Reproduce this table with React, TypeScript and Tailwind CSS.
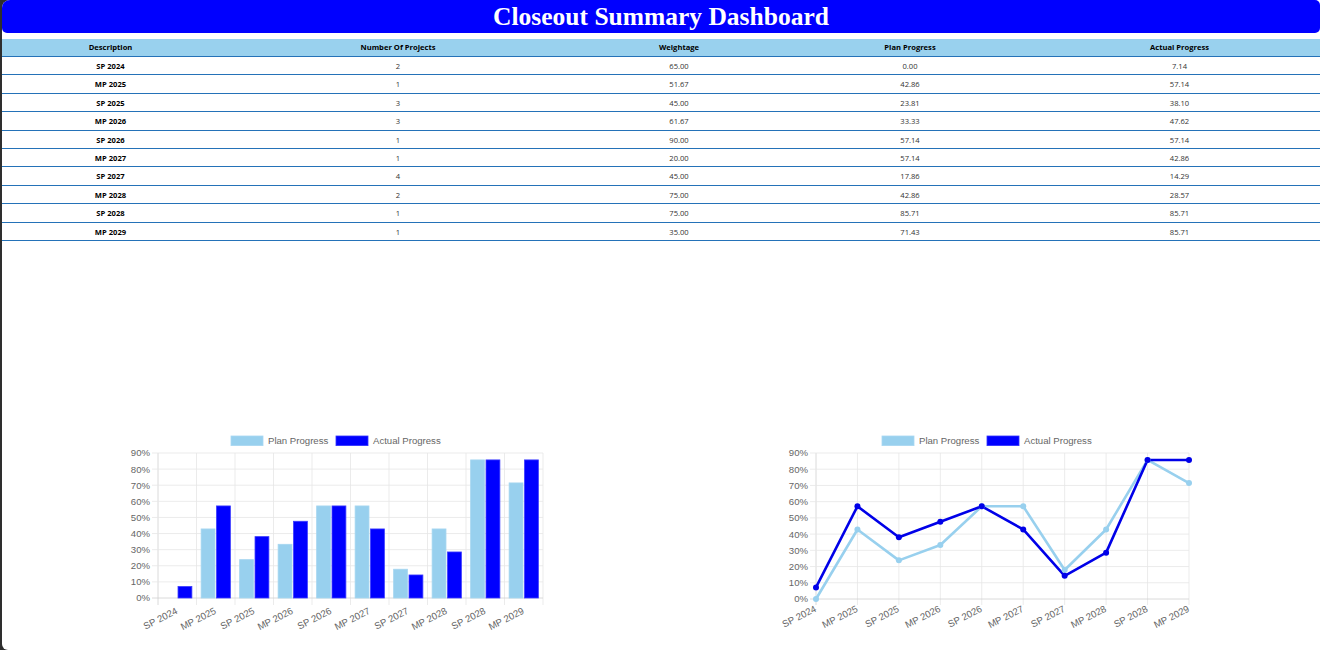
import React from "react";

const rows: string[][] = [
  ["SP 2024", "2", "65.00", "0.00", "7.14"],
  ["MP 2025", "1", "51.67", "42.86", "57.14"],
  ["SP 2025", "3", "45.00", "23.81", "38.10"],
  ["MP 2026", "3", "61.67", "33.33", "47.62"],
  ["SP 2026", "1", "90.00", "57.14", "57.14"],
  ["MP 2027", "1", "20.00", "57.14", "42.86"],
  ["SP 2027", "4", "45.00", "17.86", "14.29"],
  ["MP 2028", "2", "75.00", "42.86", "28.57"],
  ["SP 2028", "1", "75.00", "85.71", "85.71"],
  ["MP 2029", "1", "35.00", "71.43", "85.71"],
];

const headers = ["Description", "Number Of Projects", "Weightage", "Plan Progress", "Actual Progress"];
const labels = rows.map((r) => r[0]);
const plan = rows.map((r) => parseFloat(r[3]));
const actual = rows.map((r) => parseFloat(r[4]));

const PLAN = "#98d0ee";
const ACT = "#0000ff";
const GRID = "#e6e6e6";
const TICK = "#666666";
const FONT = "'Liberation Sans', Arial, sans-serif";

function Legend({ cx }: { cx: number }) {
  const x0 = cx - 105;
  return (
    <g fontFamily={FONT} fontSize={9.6} fill={TICK}>
      <rect x={x0} y={436} width={32} height={9.6} fill={PLAN} stroke="#a8d8f2" strokeWidth={0.8} />
      <text x={x0 + 37} y={444}>Plan Progress</text>
      <rect x={x0 + 105} y={436} width={32} height={9.6} fill={ACT} stroke="#3333ff" strokeWidth={0.8} />
      <text x={x0 + 142} y={444}>Actual Progress</text>
    </g>
  );
}

function YAxis({ left, right, top, bottom, labelX }: { left: number; right: number; top: number; bottom: number; labelX: number }) {
  const items = [];
  for (let i = 0; i <= 9; i++) {
    const y = bottom - ((bottom - top) * i) / 9;
    items.push(
      <g key={i}>
        <line x1={left - 6} x2={right} y1={y} y2={y} stroke={i === 0 ? "#d0d0d0" : GRID} strokeWidth={0.8} />
        <text x={labelX} y={y + 3.4} textAnchor="end" fontFamily={FONT} fontSize={9.6} fill={TICK}>
          {i * 10}%
        </text>
      </g>
    );
  }
  return <g>{items}</g>;
}

function BarChart() {
  const L = 158, R = 543, T = 453, B = 598;
  const cw = (R - L) / 10;
  const sy = (B - T) / 90;
  const bw = ((cw * 0.8) / 2) * 0.9;
  return (
    <svg width={659} height={225} className="block">
      <g transform="translate(-2,-425)">
        <Legend cx={336} />
        {Array.from({ length: 11 }).map((_, i) => (
          <line key={i} x1={L + i * cw} x2={L + i * cw} y1={T} y2={B + 7} stroke={i === 0 ? "#d0d0d0" : GRID} strokeWidth={0.8} />
        ))}
        <YAxis left={L} right={R} top={T} bottom={B} labelX={150} />
        {labels.map((lab, i) => {
          const cx = L + cw * (i + 0.5);
          const slot = cw * 0.4;
          const ph = plan[i] * sy;
          const ah = actual[i] * sy;
          return (
            <g key={lab}>
              {ph > 0 && (
                <rect x={cx - slot + (slot - bw) / 2} y={B - ph} width={bw} height={ph} fill={PLAN} stroke="#a6d6f0" strokeWidth={0.8} />
              )}
              <rect x={cx + (slot - bw) / 2} y={B - ah} width={bw} height={ah} fill={ACT} stroke="#3b3bff" strokeWidth={0.8} />
              <text
                x={cx + 1}
                y={613}
                textAnchor="end"
                fontFamily={FONT}
                fontSize={9.6}
                fill={TICK}
                transform={`rotate(-27 ${cx + 1} 613)`}
              >
                {lab}
              </text>
            </g>
          );
        })}
      </g>
    </svg>
  );
}

function LineChart() {
  const L = 816, R = 1189, T = 453, B = 599;
  const step = (R - L) / 9;
  const sy = (B - T) / 90;
  const pts = (vals: number[]) => vals.map((v, i) => `${L + i * step},${B - v * sy}`).join(" ");
  return (
    <svg width={659} height={225} className="block">
      <g transform="translate(-661,-425)">
        <Legend cx={987} />
        {Array.from({ length: 10 }).map((_, i) => (
          <line key={i} x1={L + i * step} x2={L + i * step} y1={T} y2={B + 6} stroke={i === 0 ? "#d0d0d0" : GRID} strokeWidth={0.8} />
        ))}
        <YAxis left={L} right={R} top={T} bottom={B} labelX={808} />
        <polyline points={pts(plan)} fill="none" stroke={PLAN} strokeWidth={2.6} strokeLinejoin="round" />
        <polyline points={pts(actual)} fill="none" stroke="#0000e8" strokeWidth={2.6} strokeLinejoin="round" />
        {plan.map((v, i) => (
          <circle key={"p" + i} cx={L + i * step} cy={B - v * sy} r={3} fill={PLAN} />
        ))}
        {actual.map((v, i) => (
          <circle key={"a" + i} cx={L + i * step} cy={B - v * sy} r={3} fill="#0000e8" />
        ))}
        {labels.map((lab, i) => {
          const x = L + i * step + 1;
          return (
            <text
              key={lab}
              x={x}
              y={611}
              textAnchor="end"
              fontFamily={FONT}
              fontSize={9.6}
              fill={TICK}
              transform={`rotate(-27 ${x} 611)`}
            >
              {lab}
            </text>
          );
        })}
      </g>
    </svg>
  );
}

export default function App() {
  const cols = "grid grid-cols-[217px_358px_204px_258px_281px]";
  return (
    <div className="flex h-[650px] w-[1320px] bg-[#2e2e2e] overflow-hidden">
      <div className="ml-[2px] flex flex-1 flex-col bg-white rounded-tl-[8px] rounded-bl-[6px] overflow-hidden">
        <div className="flex h-[33px] items-center justify-center rounded-[5px] bg-[#0000ff]">
          <h1 className="text-[25.5px] font-bold leading-none text-white [font-family:'Liberation_Serif','Times_New_Roman',serif]">
            Closeout Summary Dashboard
          </h1>
        </div>
        <div className="mt-[6px] text-[7.6px] [font-family:'Open_Sans','Noto_Sans',sans-serif]">
          <div className={`${cols} h-[18px] items-center border-b border-[#2472b8] bg-[#99d1ee] font-bold text-black`}>
            {headers.map((h) => (
              <div key={h} className="text-center">
                {h}
              </div>
            ))}
          </div>
          {rows.map((r) => (
            <div key={r[0]} className={`${cols} h-[18.4px] items-center border-b border-[#2472b8] pt-[2px] text-[#333333]`}>
              {r.map((c, j) => (
                <div key={j} className={`text-center ${j === 0 ? "font-bold text-black" : ""}`}>
                  {c}
                </div>
              ))}
            </div>
          ))}
        </div>
        <div className="mt-auto grid grid-cols-2">
          <BarChart />
          <LineChart />
        </div>
      </div>
    </div>
  );
}
